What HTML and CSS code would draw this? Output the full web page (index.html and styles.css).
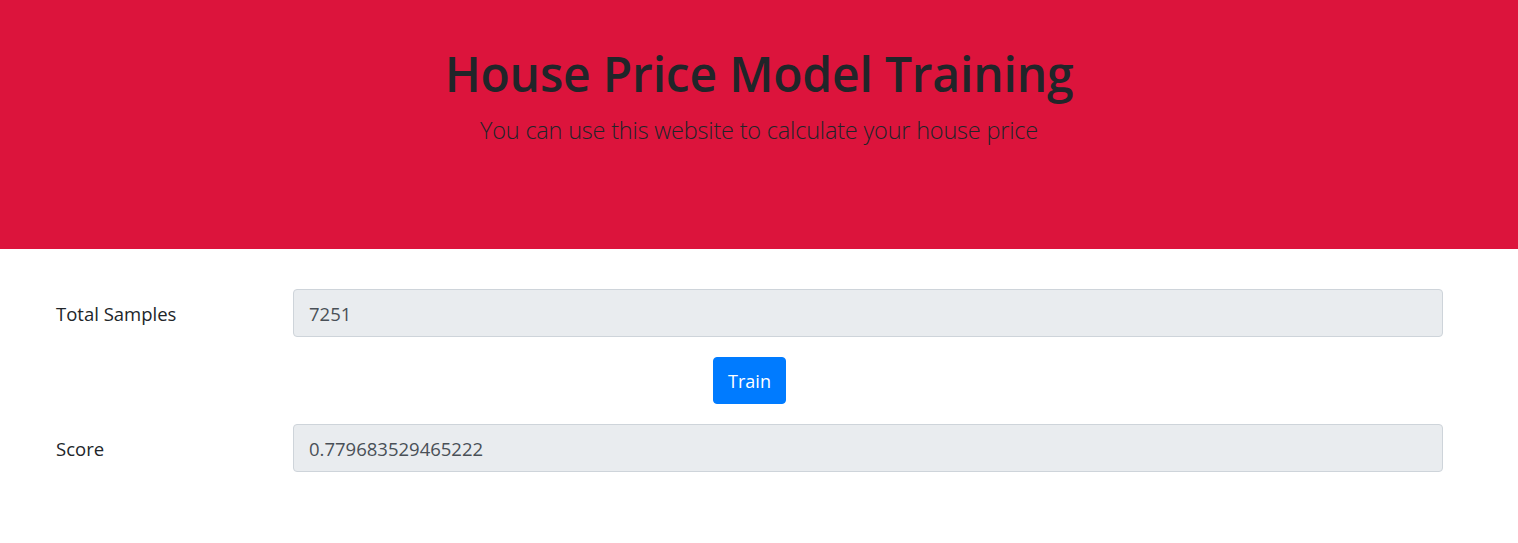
FILE: index.html
```html
<!DOCTYPE html>
<html lang="en">
<head>
<meta charset="utf-8">
<title>House Price Model Training</title>
<link rel="stylesheet" href="styles.css">
</head>
<body>
<header class="hero">
  <h1 class="hero-title">House Price Model Training</h1>
  <p class="hero-lead">You can use this website to calculate your house price</p>
</header>
<main class="form">
  <div class="form-row">
    <label class="form-label">Total Samples</label>
    <div class="form-field">7251</div>
  </div>
  <div class="form-actions">
    <button class="btn">Train</button>
  </div>
  <div class="form-row">
    <label class="form-label">Score</label>
    <div class="form-field">0.779683529465222</div>
  </div>
</main>
</body>
</html>
```
FILE: styles.css
```css
* { box-sizing: border-box; }
html, body { margin: 0; padding: 0; }
body {
  font-family: "Open Sans", "Noto Sans", sans-serif;
  color: #212529;
  background: #fff;
}
.hero {
  background: #dc143c;
  height: 249px;
  padding-top: 40px;
  text-align: center;
}
.hero-title {
  margin: 0 0 8px;
  font-size: 48px;
  line-height: 67px;
  font-weight: 600;
  color: #212529;
  letter-spacing: -0.2px;
}
.hero-lead {
  margin: 0;
  font-size: 23.5px;
  line-height: 30px;
  font-weight: 300;
  color: #212529;
  letter-spacing: -0.2px;
}
.form {
  width: 1387px;
  margin-left: 56px;
  padding-top: 40px;
  display: flex;
  flex-direction: column;
  gap: 20px;
}
.form-row {
  display: flex;
  align-items: center;
}
.form-label {
  width: 237px;
  font-size: 18.5px;
}
.form-field {
  flex: 1;
  height: 48px;
  padding: 0 15px;
  display: flex;
  align-items: center;
  background: #e9ecef;
  border: 1px solid #ced4da;
  border-radius: 4px;
  font-size: 18.5px;
  color: #495057;
}
.form-actions {
  display: flex;
  justify-content: center;
}
.btn {
  height: 47px;
  padding: 0 14px;
  background: #007bff;
  border: 1px solid #007bff;
  border-radius: 4px;
  color: #fff;
  font-family: inherit;
  font-size: 18px;
}
```
